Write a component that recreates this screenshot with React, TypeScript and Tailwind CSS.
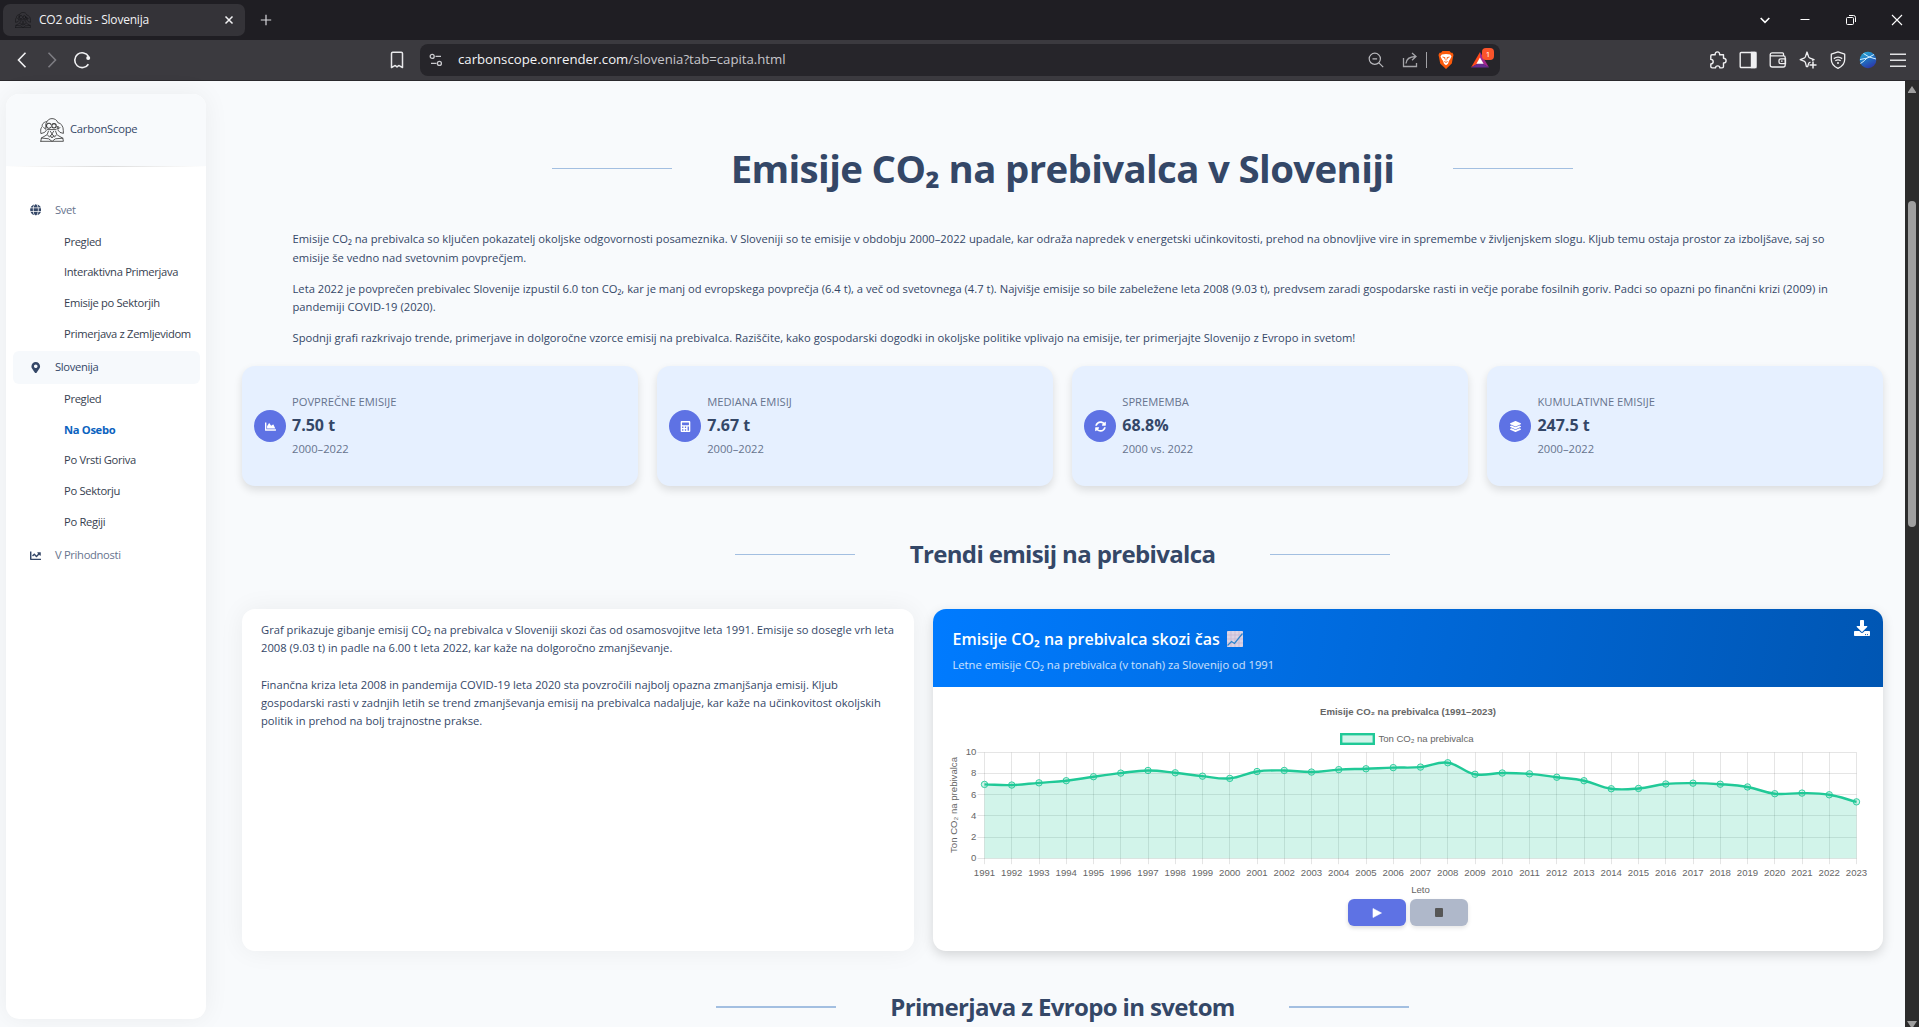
import type { ReactNode } from "react";
import {
  FaCalculator,
  FaChartArea,
  FaChartLine,
  FaDownload,
  FaGlobe,
  FaLayerGroup,
  FaMapMarkerAlt,
  FaSyncAlt,
} from "react-icons/fa";

/* ---------- Browser chrome ---------- */

function LogoIcon({ className, stroke }: { className: string; stroke: string }) {
  return (
    <svg viewBox="0 0 24 24" className={className} fill="none" stroke={stroke} strokeWidth="0.85" strokeLinejoin="round" strokeLinecap="round">
      <path d="M6.4 5C7.2 2 9.3.6 12 .6S17 2 17.8 4.6C21.4 5.4 23.4 8.4 23.3 12.6L23.4 15.4 20 14.4 18 12.2" />
      <path d="M6.4 3.6C3.2 4.4 1.9 6.2 2.2 8.6.8 10 .6 11.6.7 13.4L.9 15.6 4.6 14.4 6.6 12" />
      <path d="M5.4 11.2 3.6 9.2M18.4 11 20 9.4" />
      <path d="M10.800 6.300A2.400 2.500 0 1 0 10.800 9.300" strokeWidth="1.1" />
      <circle cx="14" cy="7.8" r="2.2" strokeWidth="1.1" />
      <path d="M17.2 8.6h1.2v1.1h-1.2v1.1h1.4M5.8 5.8v5.200M7.500 11.600h8.600" />
      <path d="M8.4 13.2 7.2 16.6 9.6 19.2 12 15.8 14.4 19.2 16.8 16.4 15.6 13.2" />
      <path d="M10.400 13.400 12 15.800 13.600 13.400M10.4 17.6 12 20 13.8 17.6" />
      <path d="M.8 23.3H23.4L22.8 20.2 17.6 17.2M.8 23.3 1.4 20 6.6 17M1.4 20 8.6 20.8 11.6 23M22.8 20.2 15.4 20.8 12.6 23" />
    </svg>
  );
}

function TabStrip() {
  return (
    <div className="flex h-10 shrink-0 items-center bg-[#1f1e23] text-[#f2f2f4]">
      <div className="ml-[3px] flex h-8 w-[242px] items-center rounded-[7px] bg-[#343338] pl-3 pr-[9px]">
        <LogoIcon className="h-4 w-4" stroke="#151518" />
        <span className="ml-2 grow text-[12px] tracking-[-0.2px]">CO2 odtis - Slovenija</span>
        <svg viewBox="0 0 14 14" className="h-[14px] w-[14px]" stroke="#f2f2f4" strokeWidth="1.5">
          <path d="M3.5 3.5l7 7M10.5 3.5l-7 7" />
        </svg>
      </div>
      <svg viewBox="0 0 12 12" className="ml-[15px] h-3 w-3" stroke="#d8d8dc" strokeWidth="1.2">
        <path d="M6 .8v10.4M.8 6h10.4" />
      </svg>
      <svg viewBox="0 0 12 12" className="ml-auto h-3 w-3" fill="none" stroke="#fff" strokeWidth="1.6">
        <path d="M1.700 4L6 8.300 10.300 4" />
      </svg>
      <svg viewBox="0 0 12 12" className="ml-7 h-3 w-3" stroke="#fff" strokeWidth="1">
        <path d="M1.5 5.5h9" />
      </svg>
      <svg viewBox="0 0 12 12" className="ml-[34px] h-3 w-3" fill="none" stroke="#fff" strokeWidth="1">
        <rect x="1.5" y="3.5" width="7" height="7" rx="1" />
        <path d="M4 1.5h4.5a2 2 0 0 1 2 2V8" />
      </svg>
      <svg viewBox="0 0 12 12" className="ml-[34px] mr-4 h-3 w-3" stroke="#fff" strokeWidth="1.1">
        <path d="M1 1l10 10M11 1L1 11" />
      </svg>
    </div>
  );
}

function Toolbar() {
  return (
    <div className="flex h-[41px] shrink-0 items-center border-b border-[#2a292d] bg-[#3b3a3f]">
      <svg viewBox="0 0 10 16" className="ml-[17px] h-4 w-[10px]" fill="none" stroke="#f2f2f4" strokeWidth="1.6">
        <path d="M8.5 .8L1.5 8l7 7.2" />
      </svg>
      <svg viewBox="0 0 10 16" className="ml-5 h-4 w-[10px]" fill="none" stroke="#7d7c82" strokeWidth="1.6">
        <path d="M1.5 .8L8.5 8l-7 7.2" />
      </svg>
      <svg viewBox="0 0 18 18" className="ml-4 h-[18px] w-[18px]" fill="none" stroke="#f2f2f4" strokeWidth="1.6">
        <path d="M15.4 13.2A7.4 7.4 0 1 1 15.6 5.6" />
        <circle cx="15.2" cy="7" r="2" fill="#f2f2f4" stroke="none" />
      </svg>
      <svg viewBox="0 0 14 18" className="ml-[299px] h-[18px] w-[14px]" fill="none" stroke="#e8e8ea" strokeWidth="1.5" strokeLinejoin="round">
        <path d="M1.5 2.5q0-1.2 1.2-1.2h8.6q1.2 0 1.2 1.2v14l-2.9-1.7q-.5-.4-1-.1L7 16l-1.600-1.300q-.5-.3-1 .1l-2.900 1.700z" />
      </svg>
      <div className="ml-4 flex h-8 w-[1080px] items-center rounded-lg bg-[#26252a]">
        <svg viewBox="0 0 14 14" className="ml-[9px] h-[14px] w-[14px]" fill="none" stroke="#c9c9cd" strokeWidth="1.3">
          <circle cx="3.200" cy="3.400" r="2" />
          <path d="M6.500 3.400h5.500M2 10.400h5.500" />
          <circle cx="10.400" cy="10.400" r="2" />
        </svg>
        <span className="ml-[15px] grow text-[13.2px] text-[#c6c6ca]">
          <span className="text-[#f4f4f6]">carbonscope.onrender.com</span>/slovenia?tab=capita.html
        </span>
        <svg viewBox="0 0 16 16" className="h-4 w-4" fill="none" stroke="#b9b9bd" strokeWidth="1.200">
          <circle cx="6.800" cy="6.800" r="5.600" />
          <path d="M10.900 10.900l4.300 4.300M4.500 6.800h4.600" />
        </svg>
        <svg viewBox="0 0 16 16" className="ml-[18px] h-4 w-4" fill="none" stroke="#a6a6aa" strokeWidth="1.300">
          <path d="M1.500 6v8.500h13V11M4 11.500C4.300 7 7 4.800 13.500 4.500M10 1l4 3.500-4 3.700" />
        </svg>
        <div className="ml-2 h-4 w-px bg-[#a2a2a6]" />
        <svg viewBox="0 0 16 18" className="ml-[11px] h-[18px] w-4">
          <path d="M4.500 0h7L13 1.700h1.500L15.500 4 15 6l-1.200 6.500L8 18 2.200 12.500 1 6 .5 4l1-2.300H3z" fill="#fb5a0b" />
          <path d="M3.800 3.400L8 3l4.200.4 1.300 2.200-1.500 2.900-1 1.200-1 3L8 14.300l-2-1.600-1-3-1-1.200-1.500-2.900z" fill="#fff" />
          <path d="M4.500 6l2.500.7-.3 1.500M11.500 6L9 6.700l.3 1.500M6.300 10.500L8 11.400l1.700-.9M8 8v1.500" fill="none" stroke="#fb5a0b" strokeWidth="0.900" />
        </svg>
        <div className="relative ml-[17px] mr-[9px] h-[20px] w-[20px]">
          <svg viewBox="0 0 18 16" className="absolute left-0 top-[2px] h-4 w-[18px]">
            <path d="M9 0L0 15.500l9-5z" fill="#ff4a1c" />
            <path d="M9 0l9 15.500-9-5z" fill="#a3278f" />
            <path d="M0 15.500h18l-9-5.500z" fill="#662d91" />
            <path d="M9 5.500l3.600 6.200H5.400z" fill="#fff" />
          </svg>
          <div className="absolute left-[11px] top-[-2px] flex h-3 w-3 items-center justify-center rounded-[4px] bg-[#fb542b] text-[8px] leading-none text-white">1</div>
        </div>
      </div>
      <div className="ml-auto mr-[13px] flex items-center gap-3">
        <svg viewBox="0 0 18 18" className="h-[18px] w-[18px]" fill="none" stroke="#f0f0f2" strokeWidth="1.400" strokeLinejoin="round">
          <path d="M3 3.800h3.200C5.900 2 7 .9 8.400.9s2.500 1.100 2.200 2.900H14.500v3.500c1.600.1 2.600 1.100 2.600 2.400s-1 2.300-2.600 2.300v3.500q0 1.400-1.400 1.400h-2.200c-.1-1.300-1-2-2.200-2s-2.100.7-2.200 2H3.200q-1.400 0-1.400-1.400v-2.600c1.600-.1 2.400-1 2.400-2.200S3.400 8.500 1.800 8.400V5q0-1.200 1.200-1.200z" />
        </svg>
        <svg viewBox="0 0 18 18" className="h-[18px] w-[18px]" fill="none" stroke="#f0f0f2" strokeWidth="1.400">
          <rect x="1.200" y="1.500" width="15.600" height="15" rx="1" />
          <path d="M12.500 1.500h4.300v15h-4.300z" fill="#f0f0f2" />
        </svg>
        <svg viewBox="0 0 18 18" className="h-[18px] w-[18px]" fill="none" stroke="#f0f0f2" strokeWidth="1.300">
          <path d="M1.200 3.500V14q0 2 2 2h11q2 0 2-2V6.500q0-1.600-1.600-1.600H3Q1.200 4.900 1.200 3.400T3 1.800h10.500q1 0 1 1v2" />
          <path d="M16.500 7.800h-4.700q-1.800 0-1.800 1.700V11q0 1.700 1.800 1.700h4.700zM12 10.200h1.600" />
        </svg>
        <svg viewBox="0 0 18 18" className="h-[18px] w-[18px]" fill="none" stroke="#f0f0f2" strokeWidth="1.300" strokeLinejoin="round">
          <path d="M11.500 11.200L9.800 12 8.600 15.700H7.400L6.400 11.600Q6 10.600 5 10.200L1.200 8.700 5 7.200Q6 6.800 6.400 5.800L8 1l1.600 4.800q.4 1 1.400 1.400l4 1.500-2 .8" />
          <path d="M14 10.500v7M10.500 14h7" strokeWidth="1.500" />
        </svg>
        <svg viewBox="0 0 18 18" className="h-[18px] w-[18px]" fill="none" stroke="#f0f0f2" strokeWidth="1.300" strokeLinejoin="round">
          <path d="M9 .8l6.700 2.400v5.300c0 4-2.700 7-6.700 8.800-4-1.800-6.700-4.800-6.700-8.800V3.200z" />
          <path d="M4.800 7.600q4.200-2.800 8.400 0M6.300 9.800q2.700-1.800 5.400 0" />
          <circle cx="9" cy="12" r="1" fill="#f0f0f2" stroke="none" />
        </svg>
        <svg viewBox="0 0 18 18" className="h-[18px] w-[18px]">
          <defs>
            <linearGradient id="orb" x1="0" y1="0" x2="0.500" y2="1">
              <stop offset="0" stopColor="#2fb4d8" />
              <stop offset="0.500" stopColor="#1f78c4" />
              <stop offset="1" stopColor="#2b3dac" />
            </linearGradient>
          </defs>
          <circle cx="9" cy="9" r="8.300" fill="url(#orb)" />
          <path d="M1 8.500Q9 8 15 3.500M4.500 2.500Q9 6.500 17 8M1.500 12.500Q5.500 10 8.500 6.500" fill="none" stroke="#d5f0ff" strokeWidth="1" />
        </svg>
        <svg viewBox="0 0 16 16" className="ml-px h-4 w-4" stroke="#e2e2e4" strokeWidth="1.500">
          <path d="M0 2.200h16M0 8.200h16M0 14.200h16" />
        </svg>
      </div>
    </div>
  );
}

function Scrollbar() {
  return (
    <div className="flex w-[14px] shrink-0 flex-col items-center bg-[#2c2c2c]">
      <svg viewBox="0 0 8 7" className="mt-[5px] h-[7px] w-2 shrink-0">
        <path d="M4 0l4 6v1H0V6z" fill="#9f9f9f" />
      </svg>
      <div className="mt-[108px] h-[326px] w-2 shrink-0 rounded-full bg-[#9f9f9f]" />
      <svg viewBox="0 0 10 7" className="mb-[-1px] mt-auto h-[7px] w-[10px] shrink-0">
        <path d="M0 0h10L5.500 7h-1z" fill="#9f9f9f" />
      </svg>
    </div>
  );
}

/* ---------- Sidebar ---------- */

function NavTop({ icon, label, active, className = "" }: { icon: ReactNode; label: string; active?: boolean; className?: string }) {
  return (
    <div className={`mx-[7px] mr-[6px] flex h-[33px] items-center rounded-[6px] ${active ? "bg-[#f6f9fc] font-medium text-[#344767]" : "text-[#67748e]"} ${className}`}>
      <span className="ml-4 flex w-[13px] justify-center text-[11.500px] text-[#344767]">{icon}</span>
      <span className="ml-[13px]">{label}</span>
    </div>
  );
}

function NavSub({ label, active }: { label: string; active?: boolean }) {
  return (
    <div className={`flex h-[30.750px] items-center pl-[58px] ${active ? "font-bold text-[#0b63c0]" : "text-[#363e4f]"}`}>{label}</div>
  );
}

function Sidebar() {
  return (
    <aside className="ml-[6px] mt-[13px] flex h-[925px] w-[200px] shrink-0 flex-col overflow-hidden whitespace-nowrap rounded-[13px] bg-white text-[11.200px] tracking-[-0.320px] shadow-[0_0_26px_rgba(0,0,0,0.06)]">
      <div className="flex h-[72px] shrink-0 items-center bg-[#f8fafc] pl-[34px]">
        <LogoIcon className="h-6 w-6" stroke="#3a3a3a" />
        <span className="mb-[2px] ml-[6px] font-medium tracking-[-0.200px] text-[#344767]">CarbonScope</span>
      </div>
      <div className="h-px shrink-0 bg-linear-to-r from-transparent via-[#dcdcdc] to-transparent" />
      <nav className="mt-[26.700px]">
        <NavTop icon={<FaGlobe />} label="Svet" />
        <NavSub label="Pregled" />
        <NavSub label="Interaktivna Primerjava" />
        <NavSub label="Emisije po Sektorjih" />
        <NavSub label="Primerjava z Zemljevidom" />
        <NavTop icon={<FaMapMarkerAlt />} label="Slovenija" active className="mt-[1.300px]" />
        <NavSub label="Pregled" />
        <NavSub label="Na Osebo" active />
        <NavSub label="Po Vrsti Goriva" />
        <NavSub label="Po Sektorju" />
        <NavSub label="Po Regiji" />
        <NavTop icon={<FaChartLine />} label="V Prihodnosti" className="mt-[1.300px]" />
      </nav>
    </aside>
  );
}

/* ---------- Content ---------- */

function StatCard({ icon, label, value, sub }: { icon: ReactNode; label: string; value: string; sub: string }) {
  return (
    <div className="flex h-[120px] items-center rounded-[13px] bg-[#e6f0ff] pl-3 shadow-[0_4px_8px_rgba(0,0,0,0.120)]">
      <div className="flex h-8 w-8 items-center justify-center rounded-full bg-[#5e72e4] text-[11px] text-white">{icon}</div>
      <div className="mb-[2px] ml-[6px] text-[11.200px] leading-[18px] text-[#67748e]">
        <div>{label}</div>
        <div className="text-[16px] font-bold leading-[28px] text-[#344767]">{value}</div>
        <div className="mt-px">{sub}</div>
      </div>
    </div>
  );
}

const POINTS = [
  6.98, 6.92, 7.13, 7.33, 7.71, 8.05, 8.3, 8.08, 7.76, 7.55, 8.2, 8.3, 8.15, 8.38, 8.46, 8.57, 8.62, 9.03, 7.94, 8.06, 7.98, 7.66, 7.33, 6.57,
  6.6, 7.02, 7.1, 7.0, 6.74, 6.1, 6.16, 6.0, 5.33,
];

const LEFT = 51.5;
const TOP = 65.5;
const BOTTOM = 171.2;
const STEP = (923.5 - LEFT) / (POINTS.length - 1);
const px = (i: number) => LEFT + i * STEP;
const py = (v: number) => BOTTOM - (v / 10) * (BOTTOM - TOP);
const snap = (v: number) => Math.floor(v) + 0.5;

function splinePath(tension: number) {
  const pts = POINTS.map((v, i) => ({ x: px(i), y: py(v) }));
  const dist = (a: { x: number; y: number }, b: { x: number; y: number }) => Math.hypot(b.x - a.x, b.y - a.y);
  const handles = pts.map((p, i) => {
    const a = pts[Math.max(0, i - 1)];
    const b = pts[Math.min(pts.length - 1, i + 1)];
    const total = dist(a, p) + dist(p, b) || 1;
    const before = (tension * dist(a, p)) / total;
    const after = (tension * dist(p, b)) / total;
    return {
      inX: p.x - before * (b.x - a.x),
      inY: p.y - before * (b.y - a.y),
      outX: p.x + after * (b.x - a.x),
      outY: p.y + after * (b.y - a.y),
    };
  });
  return pts
    .map((p, i) => (i === 0 ? `M${p.x} ${p.y}` : `C${handles[i - 1].outX} ${handles[i - 1].outY} ${handles[i].inX} ${handles[i].inY} ${p.x} ${p.y}`))
    .join("");
}

function EmissionsChart() {
  const line = splinePath(0.4);
  return (
    <svg viewBox="0 0 950 212" className="block h-[212px] w-[950px]" fontFamily="'Liberation Sans', Arial, sans-serif" fontSize="9.600" fill="#666">
      <text x="475" y="28" textAnchor="middle" fontWeight="700">
        Emisije CO₂ na prebivalca (1991–2023)
      </text>
      <rect x="408.200" y="47.200" width="32.600" height="9.600" fill="#d2f4ea" stroke="#20c997" strokeWidth="2.400" />
      <text x="445.500" y="55" textLength="95" lengthAdjust="spacing">
        Ton CO₂ na prebivalca
      </text>
      <g stroke="#000" strokeOpacity="0.100" strokeWidth="1">
        {[0, 2, 4, 6, 8, 10].map((v) => (
          <path key={v} d={`M${LEFT - 7} ${snap(py(v))}H923.500`} />
        ))}
        {POINTS.map((_, i) => (
          <path key={i} d={`M${snap(px(i))} ${TOP}V${BOTTOM + 6}`} />
        ))}
      </g>
      {[0, 2, 4, 6, 8, 10].map((v) => (
        <text key={v} x="43.300" y={py(v) + 2.8} textAnchor="end">
          {v}
        </text>
      ))}
      {POINTS.map((_, i) => (
        <text key={i} x={px(i)} y="188.600" textAnchor="middle">
          {1991 + i}
        </text>
      ))}
      <path d={`${line}V${BOTTOM}H${LEFT}Z`} fill="#20c997" fillOpacity="0.200" />
      <path d={line} fill="none" stroke="#20c997" strokeWidth="2.400" strokeLinejoin="round" />
      {POINTS.map((v, i) => (
        <circle key={i} cx={px(i)} cy={py(v)} r="3.200" fill="#20c997" fillOpacity="0.200" stroke="#20c997" strokeWidth="0.900" />
      ))}
      <text x="487.500" y="206" textAnchor="middle">
        Leto
      </text>
      <text transform="translate(23.500 118) rotate(-90)" textAnchor="middle">
        Ton CO₂ na prebivalca
      </text>
    </svg>
  );
}

function ChartEmoji() {
  return (
    <svg viewBox="0 0 16 16" className="ml-[7px] h-4 w-4">
      <rect width="16" height="16" rx="0.800" fill="#dcd3e4" />
      <path d="M4 0v16M8 0v16M12 0v16M0 4h16M0 8h16M0 12h16" stroke="#c4b5d0" strokeWidth="0.700" />
      <path d="M.5 14.500L4.500 10.500l3 2L15.500 2.500" fill="none" stroke="#2f86cf" strokeWidth="1.300" />
    </svg>
  );
}

function ChartCard() {
  return (
    <section className="flex h-[342px] w-[950px] flex-col overflow-hidden rounded-[13px] bg-white shadow-[0_4px_12px_rgba(0,0,0,0.150)]">
      <header className="flex h-[78px] shrink-0 justify-between bg-[linear-gradient(100deg,#007bff,#0056b3)] pl-[19.500px] pr-[13px] text-white">
        <div>
          <h3 className="mt-[18px] flex h-6 items-center text-[16px] font-semibold">
            Emisije CO₂ na prebivalca skozi čas
            <ChartEmoji />
          </h3>
          <p className="mt-[5px] text-[11.200px] leading-[18px] text-white/80">Letne emisije CO₂ na prebivalca (v tonah) za Slovenijo od 1991</p>
        </div>
        <FaDownload className="mt-[11px] h-4 w-4" />
      </header>
      <EmissionsChart />
      <div className="flex justify-center gap-1">
        <button className="flex h-[27px] w-[58px] items-center justify-center rounded-[6px] bg-[#5e72e4] shadow-[0_2px_4px_rgba(0,0,0,0.150)]">
          <svg viewBox="0 0 10 10" className="h-[10px] w-[10px]">
            <path d="M1 .5L9.500 5 1 9.500z" fill="#fff" stroke="#fff" strokeLinejoin="round" strokeWidth="0.600" />
          </svg>
        </button>
        <button className="flex h-[27px] w-[58px] items-center justify-center rounded-[6px] bg-[#afb8ca] shadow-[0_2px_4px_rgba(0,0,0,0.100)]">
          <span className="h-[8.500px] w-[8.500px] rounded-[1px] bg-[#565656]" />
        </button>
      </div>
    </section>
  );
}

function Heading({ children, large, thick }: { children: ReactNode; large?: boolean; thick?: boolean }) {
  return (
    <div className={`flex items-center justify-center whitespace-nowrap font-bold text-[#344767] ${large ? "h-[54px] gap-[58.500px] text-[38.400px]" : "h-8 gap-[54.500px] text-[24px]"}`}>
      <span className={`w-[120px] bg-[#a3bfe1] ${thick ? "h-[2px]" : "h-px"}`} />
      <h2 className={`tracking-[-0.640px] ${large ? "pt-[2px]" : ""}`}>{children}</h2>
      <span className={`w-[120px] bg-[#a3bfe1] ${thick ? "h-[2px]" : "h-px"}`} />
    </div>
  );
}

export default function App() {
  return (
    <div className="flex h-[1027px] w-[1919px] flex-col overflow-hidden font-['Open_Sans',sans-serif]">
      <TabStrip />
      <Toolbar />
      <div className="flex min-h-0 grow bg-[#f8fafc]">
        <Sidebar />
        <main className="ml-9 mr-[22px] min-w-0 grow overflow-visible pt-[60px]">
          <Heading large>Emisije CO₂ na prebivalca v Sloveniji</Heading>
          <div className="mt-[35.400px] flex flex-col gap-[12.800px] pl-[50.500px] pr-[49px] text-[11.200px] leading-[18.200px] tracking-[0.010px] text-[#344767]">
            <p>
              Emisije CO₂ na prebivalca so ključen pokazatelj okoljske odgovornosti posameznika. V Sloveniji so te emisije v obdobju 2000–2022 upadale,
              kar odraža napredek v energetski učinkovitosti, prehod na obnovljive vire in spremembe v življenjskem slogu. Kljub temu ostaja prostor za
              izboljšave, saj so
              <br />
              emisije še vedno nad svetovnim povprečjem.
            </p>
            <p>
              Leta 2022 je povprečen prebivalec Slovenije izpustil 6.0 ton CO₂, kar je manj od evropskega povprečja (6.4 t), a več od svetovnega (4.7 t).
              Najvišje emisije so bile zabeležene leta 2008 (9.03 t), predvsem zaradi gospodarske rasti in večje porabe fosilnih goriv. Padci so opazni po
              finančni krizi (2009) in
              <br />
              pandemiji COVID-19 (2020).
            </p>
            <p>
              Spodnji grafi razkrivajo trende, primerjave in dolgoročne vzorce emisij na prebivalca. Raziščite, kako gospodarski dogodki in okoljske
              politike vplivajo na emisije, ter primerjajte Slovenijo z Evropo in svetom!
            </p>
          </div>
          <div className="mt-[19px] grid grid-cols-4 gap-[19.500px]">
            <StatCard icon={<FaChartArea />} label="POVPREČNE EMISIJE" value="7.50 t" sub="2000–2022" />
            <StatCard icon={<FaCalculator />} label="MEDIANA EMISIJ" value="7.67 t" sub="2000–2022" />
            <StatCard icon={<FaSyncAlt />} label="SPREMEMBA" value="68.8%" sub="2000 vs. 2022" />
            <StatCard icon={<FaLayerGroup />} label="KUMULATIVNE EMISIJE" value="247.5 t" sub="2000–2022" />
          </div>
          <div className="mt-[52px]">
            <Heading>Trendi emisij na prebivalca</Heading>
          </div>
          <div className="mt-[39px] flex justify-between">
            <section className="h-[342px] w-[672px] rounded-[13px] bg-white px-[19px] pt-[12px] text-[11.200px] leading-[18.200px] text-[#344767] shadow-[0_0_26px_rgba(0,0,0,0.060)]">
              <p>
                Graf prikazuje gibanje emisij CO₂ na prebivalca v Sloveniji skozi čas od osamosvojitve leta 1991. Emisije so dosegle vrh leta
                <br />
                2008 (9.03 t) in padle na 6.00 t leta 2022, kar kaže na dolgoročno zmanjševanje.
              </p>
              <p className="mt-[18.200px]">
                Finančna kriza leta 2008 in pandemija COVID-19 leta 2020 sta povzročili najbolj opazna zmanjšanja emisij. Kljub
                <br />
                gospodarski rasti v zadnjih letih se trend zmanjševanja emisij na prebivalca nadaljuje, kar kaže na učinkovitost okoljskih
                <br />
                politik in prehod na bolj trajnostne prakse.
              </p>
            </section>
            <ChartCard />
          </div>
          <div className="mt-10">
            <Heading thick>Primerjava z Evropo in svetom</Heading>
          </div>
        </main>
        <Scrollbar />
      </div>
    </div>
  );
}
